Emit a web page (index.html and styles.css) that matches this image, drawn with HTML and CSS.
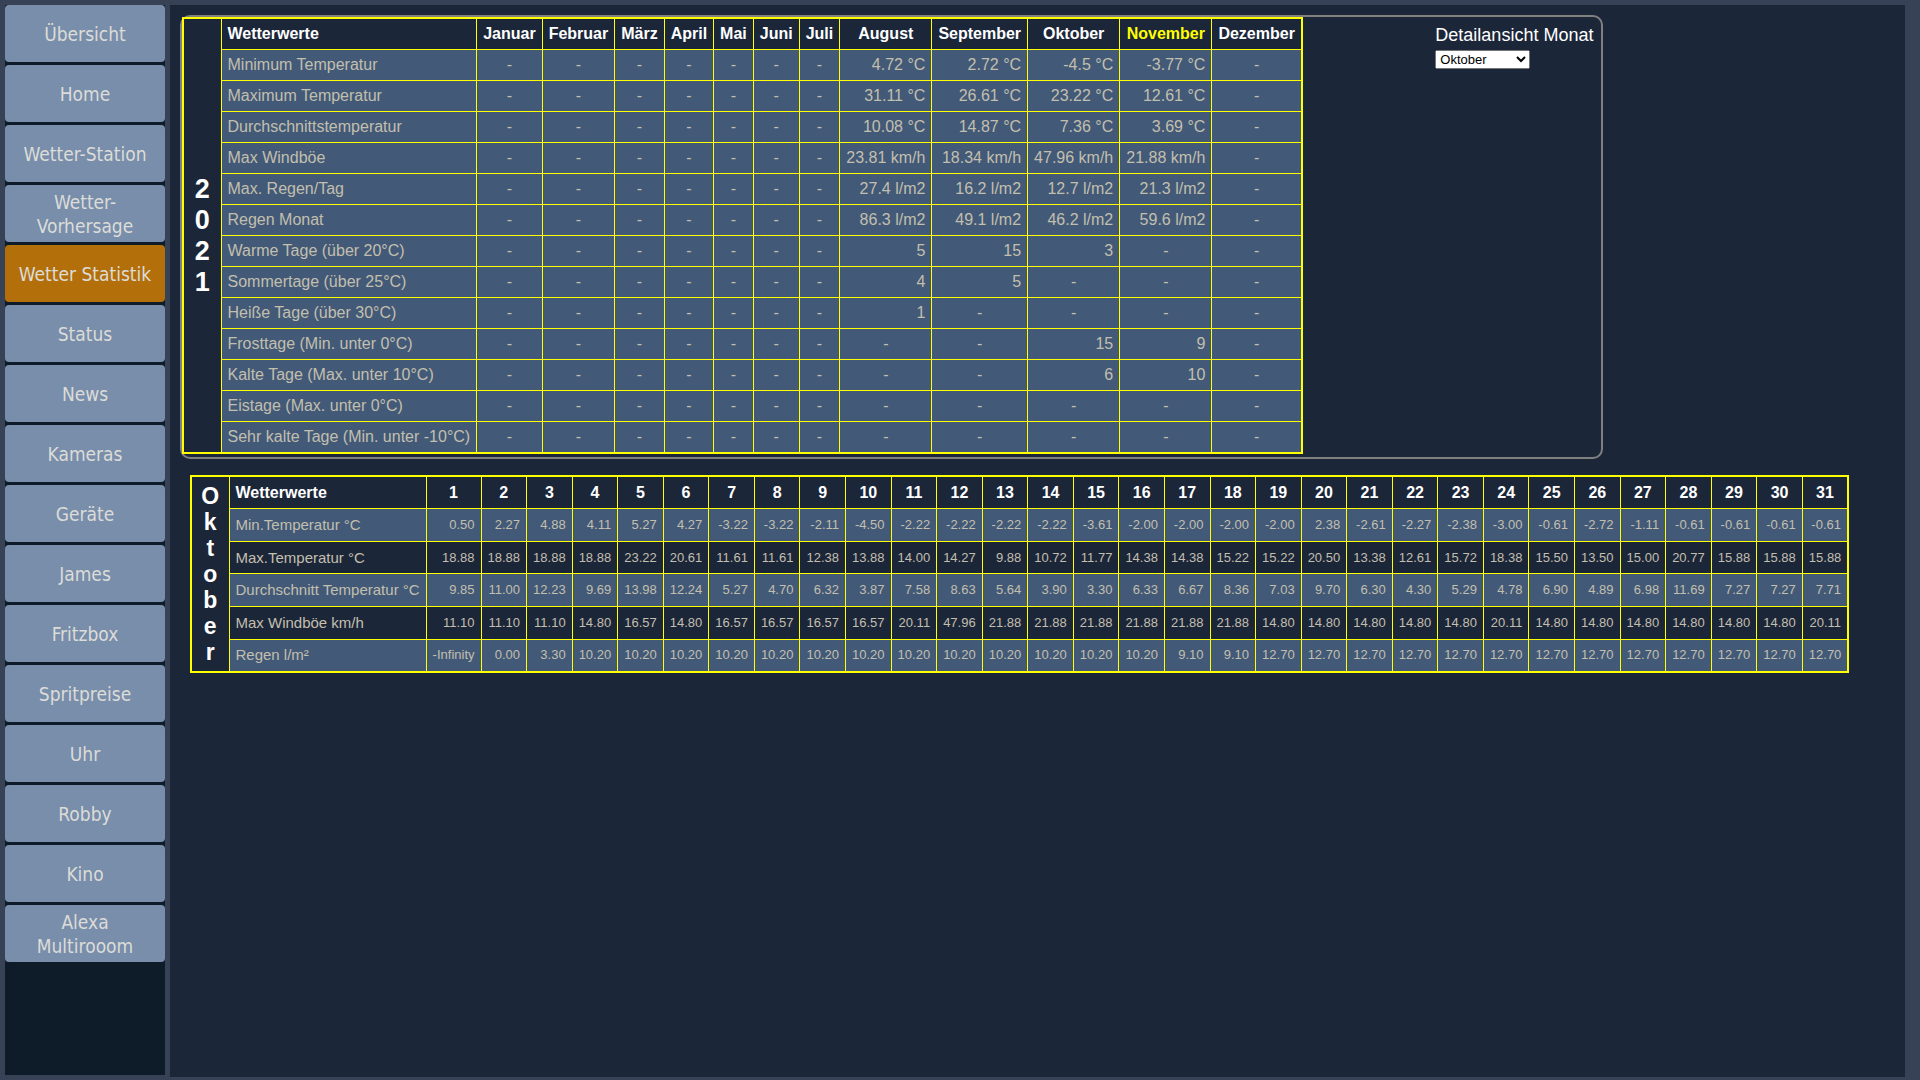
FILE: index.html
```html
<!DOCTYPE html>
<html lang="de">
<head>
<meta charset="utf-8">
<meta name="viewport" content="width=device-width, initial-scale=1">
<title>Wetter Statistik</title>
<link rel="stylesheet" href="styles.css">
</head>
<body>
<nav class="sidebar">
<button type="button" class="nav-button">Übersicht</button>
<button type="button" class="nav-button">Home</button>
<button type="button" class="nav-button">Wetter-Station</button>
<button type="button" class="nav-button">Wetter-<br>Vorhersage</button>
<button type="button" class="nav-button active" aria-current="page">Wetter Statistik</button>
<button type="button" class="nav-button">Status</button>
<button type="button" class="nav-button">News</button>
<button type="button" class="nav-button">Kameras</button>
<button type="button" class="nav-button">Geräte</button>
<button type="button" class="nav-button">James</button>
<button type="button" class="nav-button">Fritzbox</button>
<button type="button" class="nav-button">Spritpreise</button>
<button type="button" class="nav-button">Uhr</button>
<button type="button" class="nav-button">Robby</button>
<button type="button" class="nav-button">Kino</button>
<button type="button" class="nav-button">Alexa<br>Multirooom</button>
</nav>
<main class="content">
<section class="panel">
<table class="stats year">
<tbody>
<tr><th class="side" rowspan="14">2<br>0<br>2<br>1</th><th class="label">Wetterwerte</th><th>Januar</th><th>Februar</th><th>März</th><th>April</th><th>Mai</th><th>Juni</th><th>Juli</th><th>August</th><th>September</th><th>Oktober</th><th class="current">November</th><th>Dezember</th></tr>
<tr><td class="label">Minimum Temperatur</td><td class="none">-</td><td class="none">-</td><td class="none">-</td><td class="none">-</td><td class="none">-</td><td class="none">-</td><td class="none">-</td><td>4.72 °C</td><td>2.72 °C</td><td>-4.5 °C</td><td>-3.77 °C</td><td class="none">-</td></tr>
<tr><td class="label">Maximum Temperatur</td><td class="none">-</td><td class="none">-</td><td class="none">-</td><td class="none">-</td><td class="none">-</td><td class="none">-</td><td class="none">-</td><td>31.11 °C</td><td>26.61 °C</td><td>23.22 °C</td><td>12.61 °C</td><td class="none">-</td></tr>
<tr><td class="label">Durchschnittstemperatur</td><td class="none">-</td><td class="none">-</td><td class="none">-</td><td class="none">-</td><td class="none">-</td><td class="none">-</td><td class="none">-</td><td>10.08 °C</td><td>14.87 °C</td><td>7.36 °C</td><td>3.69 °C</td><td class="none">-</td></tr>
<tr><td class="label">Max Windböe</td><td class="none">-</td><td class="none">-</td><td class="none">-</td><td class="none">-</td><td class="none">-</td><td class="none">-</td><td class="none">-</td><td>23.81 km/h</td><td>18.34 km/h</td><td>47.96 km/h</td><td>21.88 km/h</td><td class="none">-</td></tr>
<tr><td class="label">Max. Regen/Tag</td><td class="none">-</td><td class="none">-</td><td class="none">-</td><td class="none">-</td><td class="none">-</td><td class="none">-</td><td class="none">-</td><td>27.4 l/m2</td><td>16.2 l/m2</td><td>12.7 l/m2</td><td>21.3 l/m2</td><td class="none">-</td></tr>
<tr><td class="label">Regen Monat</td><td class="none">-</td><td class="none">-</td><td class="none">-</td><td class="none">-</td><td class="none">-</td><td class="none">-</td><td class="none">-</td><td>86.3 l/m2</td><td>49.1 l/m2</td><td>46.2 l/m2</td><td>59.6 l/m2</td><td class="none">-</td></tr>
<tr><td class="label">Warme Tage (über 20°C)</td><td class="none">-</td><td class="none">-</td><td class="none">-</td><td class="none">-</td><td class="none">-</td><td class="none">-</td><td class="none">-</td><td>5</td><td>15</td><td>3</td><td class="none">-</td><td class="none">-</td></tr>
<tr><td class="label">Sommertage (über 25°C)</td><td class="none">-</td><td class="none">-</td><td class="none">-</td><td class="none">-</td><td class="none">-</td><td class="none">-</td><td class="none">-</td><td>4</td><td>5</td><td class="none">-</td><td class="none">-</td><td class="none">-</td></tr>
<tr><td class="label">Heiße Tage (über 30°C)</td><td class="none">-</td><td class="none">-</td><td class="none">-</td><td class="none">-</td><td class="none">-</td><td class="none">-</td><td class="none">-</td><td>1</td><td class="none">-</td><td class="none">-</td><td class="none">-</td><td class="none">-</td></tr>
<tr><td class="label">Frosttage (Min. unter 0°C)</td><td class="none">-</td><td class="none">-</td><td class="none">-</td><td class="none">-</td><td class="none">-</td><td class="none">-</td><td class="none">-</td><td class="none">-</td><td class="none">-</td><td>15</td><td>9</td><td class="none">-</td></tr>
<tr><td class="label">Kalte Tage (Max. unter 10°C)</td><td class="none">-</td><td class="none">-</td><td class="none">-</td><td class="none">-</td><td class="none">-</td><td class="none">-</td><td class="none">-</td><td class="none">-</td><td class="none">-</td><td>6</td><td>10</td><td class="none">-</td></tr>
<tr><td class="label">Eistage (Max. unter 0°C)</td><td class="none">-</td><td class="none">-</td><td class="none">-</td><td class="none">-</td><td class="none">-</td><td class="none">-</td><td class="none">-</td><td class="none">-</td><td class="none">-</td><td class="none">-</td><td class="none">-</td><td class="none">-</td></tr>
<tr><td class="label">Sehr kalte Tage (Min. unter -10°C)</td><td class="none">-</td><td class="none">-</td><td class="none">-</td><td class="none">-</td><td class="none">-</td><td class="none">-</td><td class="none">-</td><td class="none">-</td><td class="none">-</td><td class="none">-</td><td class="none">-</td><td class="none">-</td></tr>
</tbody>
</table>
<div class="detail">
<label for="month">Detailansicht Monat</label>
<select id="month" class="month-select">
<option>Januar</option><option>Februar</option><option>März</option><option>April</option><option>Mai</option><option>Juni</option><option>Juli</option><option>August</option><option>September</option><option selected>Oktober</option><option>November</option><option>Dezember</option>
</select>
</div>
</section>
<section class="month-area">
<table class="stats month">
<colgroup><col class="col-side"><col class="col-label"><col class="col-first"><col span="30"></colgroup>
<tbody>
<tr><th class="side" rowspan="6">O<br>k<br>t<br>o<br>b<br>e<br>r</th><th class="label">Wetterwerte</th><th>1</th><th>2</th><th>3</th><th>4</th><th>5</th><th>6</th><th>7</th><th>8</th><th>9</th><th>10</th><th>11</th><th>12</th><th>13</th><th>14</th><th>15</th><th>16</th><th>17</th><th>18</th><th>19</th><th>20</th><th>21</th><th>22</th><th>23</th><th>24</th><th>25</th><th>26</th><th>27</th><th>28</th><th>29</th><th>30</th><th>31</th></tr>
<tr><td class="label">Min.Temperatur °C</td><td>0.50</td><td>2.27</td><td>4.88</td><td>4.11</td><td>5.27</td><td>4.27</td><td>-3.22</td><td>-3.22</td><td>-2.11</td><td>-4.50</td><td>-2.22</td><td>-2.22</td><td>-2.22</td><td>-2.22</td><td>-3.61</td><td>-2.00</td><td>-2.00</td><td>-2.00</td><td>-2.00</td><td>2.38</td><td>-2.61</td><td>-2.27</td><td>-2.38</td><td>-3.00</td><td>-0.61</td><td>-2.72</td><td>-1.11</td><td>-0.61</td><td>-0.61</td><td>-0.61</td><td>-0.61</td></tr>
<tr class="dark"><td class="label">Max.Temperatur °C</td><td>18.88</td><td>18.88</td><td>18.88</td><td>18.88</td><td>23.22</td><td>20.61</td><td>11.61</td><td>11.61</td><td>12.38</td><td>13.88</td><td>14.00</td><td>14.27</td><td>9.88</td><td>10.72</td><td>11.77</td><td>14.38</td><td>14.38</td><td>15.22</td><td>15.22</td><td>20.50</td><td>13.38</td><td>12.61</td><td>15.72</td><td>18.38</td><td>15.50</td><td>13.50</td><td>15.00</td><td>20.77</td><td>15.88</td><td>15.88</td><td>15.88</td></tr>
<tr><td class="label">Durchschnitt Temperatur °C</td><td>9.85</td><td>11.00</td><td>12.23</td><td>9.69</td><td>13.98</td><td>12.24</td><td>5.27</td><td>4.70</td><td>6.32</td><td>3.87</td><td>7.58</td><td>8.63</td><td>5.64</td><td>3.90</td><td>3.30</td><td>6.33</td><td>6.67</td><td>8.36</td><td>7.03</td><td>9.70</td><td>6.30</td><td>4.30</td><td>5.29</td><td>4.78</td><td>6.90</td><td>4.89</td><td>6.98</td><td>11.69</td><td>7.27</td><td>7.27</td><td>7.71</td></tr>
<tr class="dark"><td class="label">Max Windböe km/h</td><td>11.10</td><td>11.10</td><td>11.10</td><td>14.80</td><td>16.57</td><td>14.80</td><td>16.57</td><td>16.57</td><td>16.57</td><td>16.57</td><td>20.11</td><td>47.96</td><td>21.88</td><td>21.88</td><td>21.88</td><td>21.88</td><td>21.88</td><td>21.88</td><td>14.80</td><td>14.80</td><td>14.80</td><td>14.80</td><td>14.80</td><td>20.11</td><td>14.80</td><td>14.80</td><td>14.80</td><td>14.80</td><td>14.80</td><td>14.80</td><td>20.11</td></tr>
<tr><td class="label">Regen l/m²</td><td>-Infinity</td><td>0.00</td><td>3.30</td><td>10.20</td><td>10.20</td><td>10.20</td><td>10.20</td><td>10.20</td><td>10.20</td><td>10.20</td><td>10.20</td><td>10.20</td><td>10.20</td><td>10.20</td><td>10.20</td><td>10.20</td><td>9.10</td><td>9.10</td><td>12.70</td><td>12.70</td><td>12.70</td><td>12.70</td><td>12.70</td><td>12.70</td><td>12.70</td><td>12.70</td><td>12.70</td><td>12.70</td><td>12.70</td><td>12.70</td><td>12.70</td></tr>
</tbody>
</table>
</section>
</main>
</body>
</html>
```
FILE: styles.css
```css
* {
  box-sizing: border-box;
}

body {
  display: flex;
  gap: 5px;
  min-height: 100vh;
  margin: 0;
  padding: 5px 15px 3px 5px;
  background: #384256;
  color: #fff;
  font-family: "Liberation Sans", Arial, sans-serif;
  font-size: 16px;
}

.sidebar {
  display: flex;
  flex: 0 0 160px;
  flex-direction: column;
  gap: 3px;
  margin-bottom: 2px;
  background: #0e1b29;
}

.nav-button {
  height: 57px;
  padding: 0;
  border: 0;
  border-radius: 4px;
  background: #788eab;
  color: #dcdcd8;
  font-family: Tahoma, "DejaVu Sans Condensed", "Noto Sans", sans-serif;
  font-size: 19px;
  line-height: 24px;
}

.nav-button.active {
  background: #b36f09;
}

.content {
  flex: 1;
  min-width: 0;
  padding: 10px;
  background: #1c2639;
}

.panel {
  display: flex;
  align-items: flex-start;
  justify-content: space-between;
  width: 83%;
  padding-bottom: 3px;
  border: 2px solid #808080;
  border-radius: 10px;
}

.stats {
  border: 2px solid #ff0;
  border-collapse: collapse;
  white-space: nowrap;
}

.stats th,
.stats td {
  padding: 5px 6px;
  border: 1px solid #ff0;
  line-height: 20px;
}

.stats td {
  background: #425a78;
  color: #c3bfae;
  text-align: right;
}

.stats .dark td {
  background: #1c2639;
}

.stats .label {
  text-align: left;
}

.stats td.none {
  text-align: center;
}

.stats .current {
  color: #ff0;
}

.year .side {
  width: 38px;
  font-size: 27px;
  line-height: 31px;
}

.month .side {
  padding: 6px 0;
  font-size: 23px;
  line-height: 26px;
}

.detail {
  display: flex;
  flex-direction: column;
  align-items: flex-start;
  gap: 5px;
  padding: 8px;
  font-size: 18px;
  line-height: 20px;
}

.month-select {
  width: 95px;
  height: 19px;
  font-family: inherit;
  font-size: 13px;
}

.month-area {
  padding: 16px 46px 0 10px;
}

.month {
  width: 100%;
  table-layout: fixed;
}

.month tr {
  height: 32px;
}

.month td {
  font-size: 13px;
}

.month td.label {
  font-size: 15px;
}

.col-side {
  width: 38px;
}

.col-label {
  width: 197px;
}

.col-first {
  width: 55px;
}
```
